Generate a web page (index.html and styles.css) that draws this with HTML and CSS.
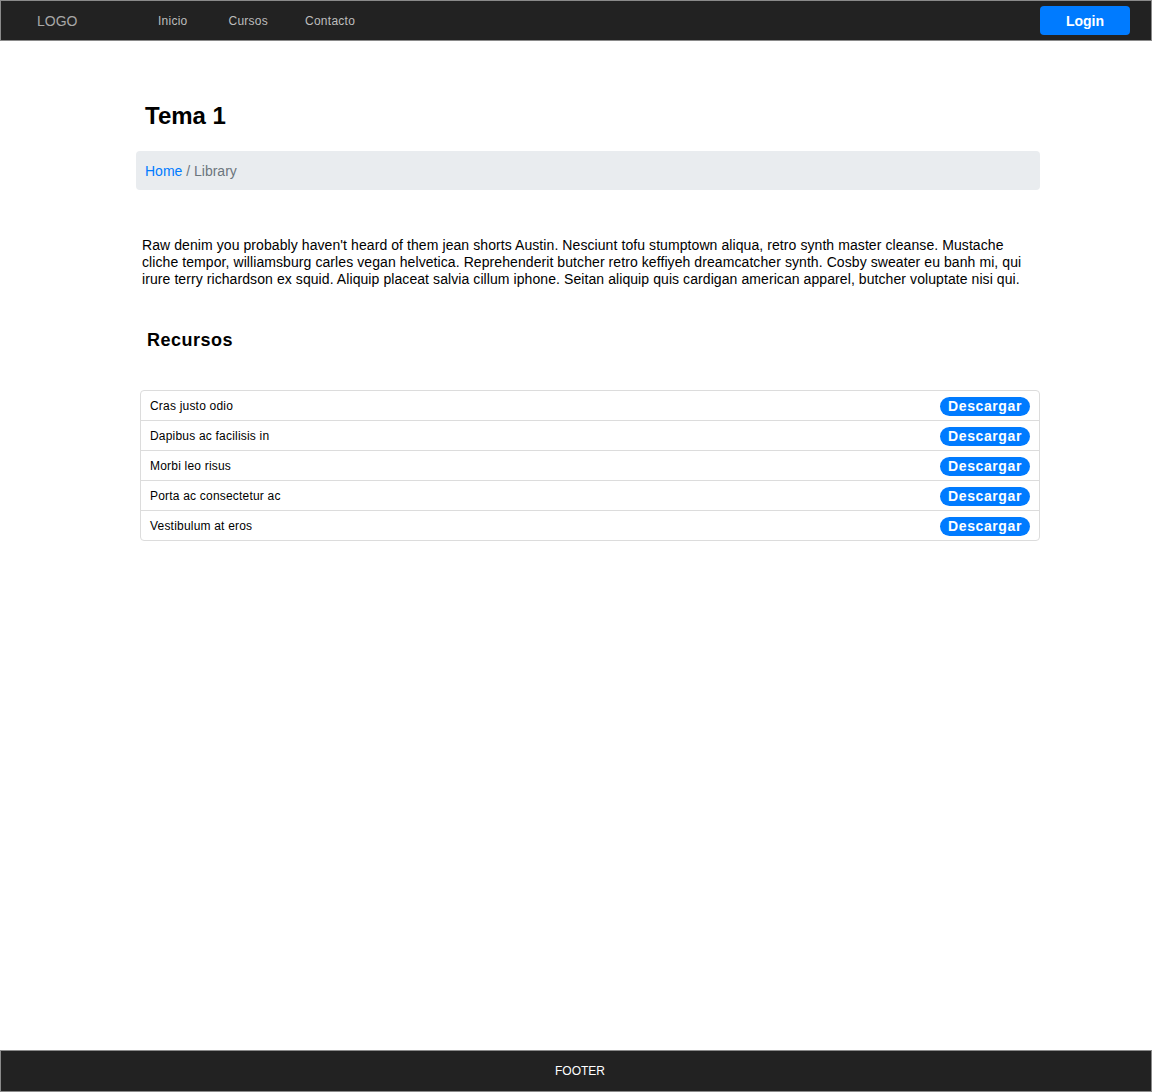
FILE: index.html
```html
<!DOCTYPE html>
<html lang="es">
<head>
<meta charset="utf-8">
<title>Tema 1</title>
<link rel="stylesheet" href="styles.css">
</head>
<body>
<div class="page">
  <header class="topbar">
    <div class="logo">LOGO</div>
    <nav class="nav">
      <a class="nav-link nav-inicio" href="#">Inicio</a>
      <a class="nav-link nav-cursos" href="#">Cursos</a>
      <a class="nav-link nav-contacto" href="#">Contacto</a>
    </nav>
    <button class="login">Login</button>
  </header>

  <main class="main">
    <h1 class="title">Tema 1</h1>
    <div class="breadcrumb"><a href="#" class="crumb-link">Home</a> / Library</div>
    <p class="intro">Raw denim you probably haven't heard of them jean shorts Austin. Nesciunt tofu stumptown aliqua, retro synth master cleanse. Mustache cliche tempor, williamsburg carles vegan helvetica. Reprehenderit butcher retro keffiyeh dreamcatcher synth. Cosby sweater eu banh mi, qui irure terry richardson ex squid. Aliquip placeat salvia cillum iphone. Seitan aliquip quis cardigan american apparel, butcher voluptate nisi qui.</p>
    <h2 class="subtitle">Recursos</h2>
    <ul class="list">
      <li class="item"><span>Cras justo odio</span><button class="dl">Descargar</button></li>
      <li class="item"><span>Dapibus ac facilisis in</span><button class="dl">Descargar</button></li>
      <li class="item"><span>Morbi leo risus</span><button class="dl">Descargar</button></li>
      <li class="item"><span>Porta ac consectetur ac</span><button class="dl">Descargar</button></li>
      <li class="item"><span>Vestibulum at eros</span><button class="dl">Descargar</button></li>
    </ul>
  </main>

  <footer class="footer">FOOTER</footer>
</div>
</body>
</html>
```

FILE: styles.css
```css
* { box-sizing: border-box; }
html, body { margin: 0; padding: 0; }
body {
  font-family: "Liberation Sans", Arial, sans-serif;
  color: #000;
  background: #fff;
}
.page {
  min-height: 1092px;
  display: flex;
  flex-direction: column;
}
.topbar {
  height: 41px;
  background: #222;
  border: 1px solid #8a8a8a;
  display: flex;
  align-items: center;
  padding: 0 21px 0 36px;
}
.logo {
  color: #a8a8a8;
  font-size: 14px;
  width: 121px;
}
.nav {
  display: flex;
  flex: 1;
}
.nav-link {
  color: #bdbdbd;
  font-size: 12px;
  letter-spacing: 0.25px;
  text-decoration: none;
}
.nav-inicio { margin-right: 41px; }
.nav-cursos { margin-right: 37px; }
.login {
  width: 90px;
  height: 29px;
  background: #007bff;
  color: #fff;
  border: none;
  border-radius: 4px;
  font-family: "Liberation Sans", Arial, sans-serif;
  font-weight: bold;
  font-size: 14px;
  padding: 0;
}
.main {
  flex: 1;
  width: 904px;
  margin-left: 136px;
  padding-top: 61px;
}
.title {
  margin: 0 0 21px 9px;
  font-size: 24px;
  font-weight: bold;
  line-height: 28px;
}
.breadcrumb {
  height: 39px;
  line-height: 40px;
  background: #e9ecef;
  border-radius: 4px;
  padding: 0 9px;
  font-size: 14px;
  color: #6c757d;
}
.crumb-link {
  color: #007bff;
  text-decoration: none;
}
.intro {
  margin: 47px 0 0 6px;
  font-size: 14px;
  line-height: 17px;
  letter-spacing: 0.08px;
  width: 892px;
}
.subtitle {
  margin: 42px 0 0 11px;
  font-size: 18px;
  font-weight: bold;
  line-height: 21px;
  letter-spacing: 0.5px;
}
.list {
  list-style: none;
  margin: 39px 0 0 4px;
  padding: 0;
  border: 1px solid #dcdcdc;
  border-radius: 4px;
  width: 900px;
}
.item {
  height: 30px;
  border-top: 1px solid #dcdcdc;
  display: flex;
  align-items: center;
  justify-content: space-between;
  padding: 0 9px 0 9px;
  font-size: 12px;
  letter-spacing: 0.2px;
}
.item:first-child {
  border-top: none;
  height: 29px;
}
.dl {
  width: 90px;
  height: 19px;
  margin-top: 2px;
  background: #007bff;
  color: #fff;
  border: none;
  border-radius: 10px;
  font-family: "Liberation Sans", Arial, sans-serif;
  font-weight: bold;
  font-size: 14px;
  letter-spacing: 0.6px;
  padding: 0;
  line-height: 19px;
}
.footer {
  height: 42px;
  background: #222;
  border: 1px solid #8a8a8a;
  color: #fff;
  font-size: 12px;
  display: flex;
  align-items: center;
  justify-content: center;
  padding-left: 8px;
}
```
